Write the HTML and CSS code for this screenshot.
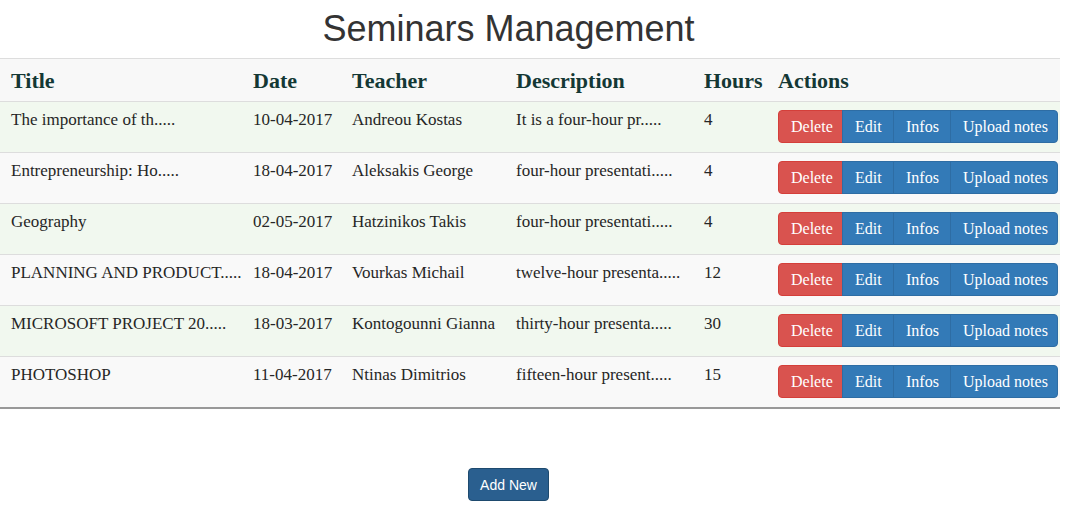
FILE: index.html
```html
<!DOCTYPE html>
<html>
<head>
<meta charset="utf-8">
<link rel="stylesheet" href="styles.css">
</head>
<body>
<div class="page">
  <h1 class="title">Seminars Management</h1>
  <table class="seminars">
    <thead>
      <tr>
        <th class="c-title">Title</th>
        <th class="c-date">Date</th>
        <th class="c-teacher">Teacher</th>
        <th class="c-desc">Description</th>
        <th class="c-hours">Hours</th>
        <th class="c-actions">Actions</th>
      </tr>
    </thead>
    <tbody>
      <tr>
        <td>The importance of th.....</td><td>10-04-2017</td><td>Andreou Kostas</td><td>It is a four-hour pr.....</td><td>4</td>
        <td><div class="btn-group"><button class="btn btn-danger">Delete</button><button class="btn btn-primary">Edit</button><button class="btn btn-primary">Infos</button><button class="btn btn-primary">Upload notes</button></div></td>
      </tr>
      <tr>
        <td>Entrepreneurship: Ho.....</td><td>18-04-2017</td><td>Aleksakis George</td><td>four-hour presentati.....</td><td>4</td>
        <td><div class="btn-group"><button class="btn btn-danger">Delete</button><button class="btn btn-primary">Edit</button><button class="btn btn-primary">Infos</button><button class="btn btn-primary">Upload notes</button></div></td>
      </tr>
      <tr>
        <td>Geography</td><td>02-05-2017</td><td>Hatzinikos Takis</td><td>four-hour presentati.....</td><td>4</td>
        <td><div class="btn-group"><button class="btn btn-danger">Delete</button><button class="btn btn-primary">Edit</button><button class="btn btn-primary">Infos</button><button class="btn btn-primary">Upload notes</button></div></td>
      </tr>
      <tr>
        <td>PLANNING AND PRODUCT.....</td><td>18-04-2017</td><td>Vourkas Michail</td><td>twelve-hour presenta.....</td><td>12</td>
        <td><div class="btn-group"><button class="btn btn-danger">Delete</button><button class="btn btn-primary">Edit</button><button class="btn btn-primary">Infos</button><button class="btn btn-primary">Upload notes</button></div></td>
      </tr>
      <tr>
        <td>MICROSOFT PROJECT 20.....</td><td>18-03-2017</td><td>Kontogounni Gianna</td><td>thirty-hour presenta.....</td><td>30</td>
        <td><div class="btn-group"><button class="btn btn-danger">Delete</button><button class="btn btn-primary">Edit</button><button class="btn btn-primary">Infos</button><button class="btn btn-primary">Upload notes</button></div></td>
      </tr>
      <tr>
        <td>PHOTOSHOP</td><td>11-04-2017</td><td>Ntinas Dimitrios</td><td>fifteen-hour present.....</td><td>15</td>
        <td><div class="btn-group"><button class="btn btn-danger">Delete</button><button class="btn btn-primary">Edit</button><button class="btn btn-primary">Infos</button><button class="btn btn-primary">Upload notes</button></div></td>
      </tr>
    </tbody>
  </table>
  <div class="footer">
    <button class="add-btn">Add New</button>
  </div>
</div>
</body>
</html>
```

FILE: styles.css
```css
* { box-sizing: border-box; }
html, body { margin: 0; padding: 0; background: #fff; }
body { font-family: "Liberation Serif", serif; color: #222; }

.page { width: 1070px; }

.title {
  width: 1017px;
  margin: 0;
  height: 58px;
  padding-top: 9px;
  text-align: center;
  font-family: "Liberation Sans", Arial, sans-serif;
  font-weight: 400;
  font-size: 36px;
  line-height: 40px;
  color: #333;
}

.seminars {
  width: 1060px;
  border-collapse: collapse;
  table-layout: fixed;
  border-top: 1px solid #ddd;
  border-bottom: 2px solid #999;
}

.seminars th, .seminars td {
  text-align: left;
  vertical-align: top;
  padding: 8px 11px 9px;
  white-space: nowrap;
}

.seminars thead tr { background: #f8f8f8; height: 43px; }
.seminars th {
  font-size: 22px;
  font-weight: 700;
  color: #143835;
  padding-top: 9px;
  padding-bottom: 8px;
  line-height: 25px;
  border-bottom: 1px solid #ddd;
}

.c-title { width: 242px; }
.c-date { width: 99px; }
.c-teacher { width: 164px; }
.c-desc { width: 188px; }
.c-hours { width: 74px; }
.c-actions { width: 293px; }

.seminars td {
  font-size: 17px;
  line-height: 20px;
  color: #262626;
  border-top: 1px solid #ddd;
  height: 51px;
}
.seminars tbody tr:nth-child(odd) { background: #f1f8ef; }
.seminars tbody tr:nth-child(even) { background: #f9f9f9; }
.seminars tbody tr:first-child td { border-top: none; }

.btn-group { display: flex; }
.btn {
  font-family: "Liberation Serif", serif;
  font-size: 16px;
  height: 33px;
  padding: 0 12px;
  border: 1px solid #2e6da4;
  color: #fff;
  margin: 0;
  margin-left: -1px;
}
.btn:first-child { margin-left: 0; border-radius: 4px 0 0 4px; }
.btn:last-child { border-radius: 0 4px 4px 0; }
.btn-danger { background: #d9534f; border-color: #d43f3a; width: 65px; }
.btn-primary { background: #337ab7; border-color: #2e6da4; }
.btn-primary:nth-child(2) { width: 52px; }
.btn-primary:nth-child(3) { width: 58px; }
.btn-primary:nth-child(4) { width: 108px; }

.footer {
  width: 1017px;
  text-align: center;
  padding-top: 59px;
}
.add-btn {
  font-family: "Liberation Sans", Arial, sans-serif;
  font-size: 14px;
  height: 33px;
  width: 81px;
  padding: 0;
  background: #2a5f8f;
  color: #fff;
  border: 1px solid #1e4a6e;
  border-radius: 4px;
}
```
